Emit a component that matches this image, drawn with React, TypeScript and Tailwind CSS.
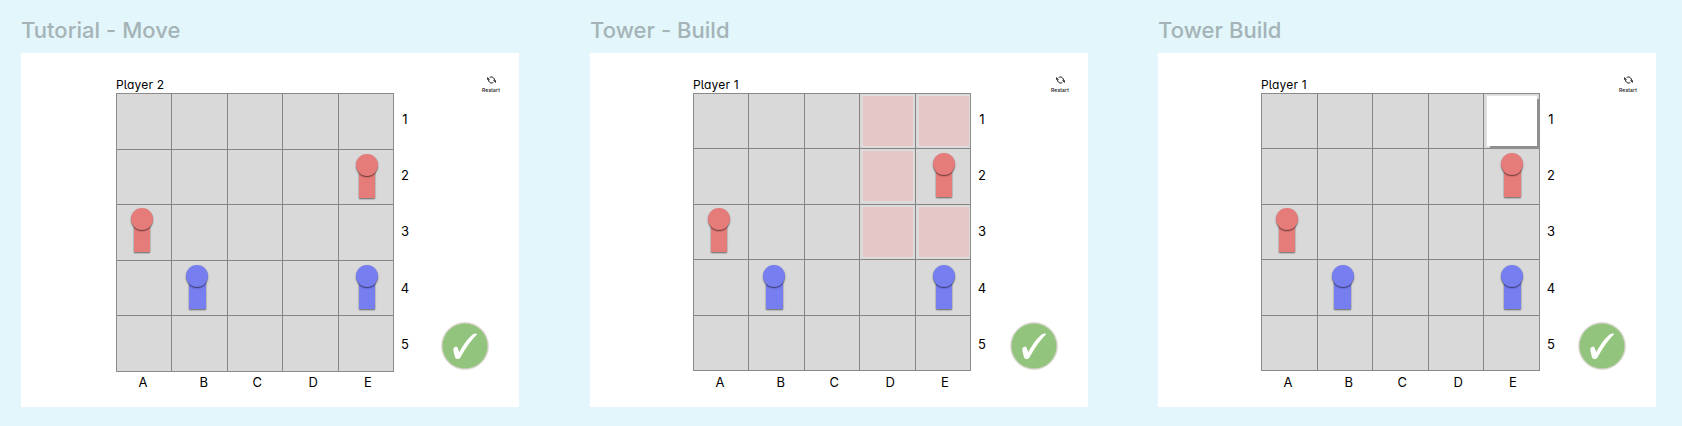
import React from "react";

type Team = "red" | "blue";
type Piece = { team: Team; x: number; y: number };
type Screen = {
  title: string;
  player: string;
  tracks: string;
  inset: string;
  spacing: string;
  labelGap: string;
  pieces: Piece[];
  highlights?: string[];
  tower?: string;
};

const COLUMNS = ["A", "B", "C", "D", "E"];
const ROWS = ["1", "2", "3", "4", "5"];

const screens: Screen[] = [
  {
    title: "Tutorial - Move",
    player: "Player 2",
    tracks: "grid-cols-[54px_55px_54px_55px_54px] grid-rows-[55px_54px_55px_54px_55px]",
    inset: "pl-[95px]",
    spacing: "mr-[71px]",
    labelGap: "pt-[2px]",
    pieces: [
      { team: "red", x: 251, y: 72 },
      { team: "red", x: 26, y: 126.3 },
      { team: "blue", x: 81.4, y: 183.4 },
      { team: "blue", x: 251, y: 183.4 },
    ],
  },
  {
    title: "Tower - Build",
    player: "Player 1",
    tracks: "grid-cols-[54px_55px_54px_55px_54px] grid-rows-[54px_55px_54px_55px_54px]",
    inset: "pl-[103px]",
    spacing: "mr-[70px]",
    labelGap: "pt-[3px]",
    pieces: [
      { team: "red", x: 251, y: 71.4 },
      { team: "red", x: 26, y: 126 },
      { team: "blue", x: 81.4, y: 183.1 },
      { team: "blue", x: 251, y: 183.1 },
    ],
    highlights: ["D1", "E1", "D2", "D3", "E3"],
  },
  {
    title: "Tower Build",
    player: "Player 1",
    tracks: "grid-cols-[55px_54px_55px_54px_55px] grid-rows-[54px_55px_54px_55px_54px]",
    inset: "pl-[103px]",
    spacing: "mr-0",
    labelGap: "pt-[3px]",
    pieces: [
      { team: "red", x: 251.3, y: 71.4 },
      { team: "red", x: 26.2, y: 126 },
      { team: "blue", x: 81.7, y: 183.1 },
      { team: "blue", x: 251.3, y: 183.1 },
    ],
    tower: "E1",
  },
];

function Pawn({ team, x, y }: Piece) {
  const color = team === "red" ? "bg-[#e67c79]" : "bg-[#767ef0]";
  return (
    <div
      className="absolute flex w-[22px] -translate-x-1/2 -translate-y-[11px] flex-col items-center"
      style={{ left: x, top: y }}
    >
      <div className={`z-10 size-[22px] shrink-0 rounded-full shadow-[0_1px_1.5px_rgba(0,0,0,0.6)] ${color}`} />
      <div className={`-mt-[7px] h-[29px] w-[16.6px] shadow-[0_1px_1.5px_rgba(0,0,0,0.55)] ${color}`} />
    </div>
  );
}

function Board({ screen }: { screen: Screen }) {
  return (
    <div className="relative w-fit">
      <div className={`grid w-fit gap-px border border-[#8b8b8b] bg-[#858585] ${screen.tracks}`}>
        {ROWS.map((row) =>
          COLUMNS.map((column) => {
            const id = column + row;
            return (
              <div key={id} className="bg-[#d9d9d9] pt-[2px] pl-[3px]">
                {screen.highlights?.includes(id) && (
                  <div className="size-[50px] bg-[#e5c7c8] outline-1 outline-[#dedede]" />
                )}
                {screen.tower === id && (
                  <div className="relative size-[50px] bg-white shadow-[3px_3px_0.5px_#8f8f8f,0_0_0_1px_#e2e2e2]" />
                )}
              </div>
            );
          })
        )}
      </div>
      {screen.pieces.map((piece) => (
        <Pawn key={`${piece.x}-${piece.y}`} {...piece} />
      ))}
    </div>
  );
}

function Restart() {
  return (
    <button className="flex w-[30px] flex-col items-center text-[#111]">
      <svg viewBox="0 0 27 24" className="h-[8px] w-[9px]" fill="none" stroke="currentColor" strokeWidth="3">
        <path d="M8 5C14 0.500 21.500 4 22.500 12M19 19C13 23.500 5.500 20 4.500 12" />
        <path d="M0.500 3v8.500h8.500zM26.500 21v-8.500h-8.500z" fill="currentColor" stroke="none" />
      </svg>
      <span className="mt-[3px] text-[5px] leading-[6px] font-medium tracking-[0.12px]">Restart</span>
    </button>
  );
}

function Confirm() {
  return (
    <button className="flex size-[48px] items-center justify-center rounded-full border border-[#eadbdf] bg-[#92c47d] shadow-[inset_0_0_0_0.5px_#dcd9cf]">
      <svg viewBox="0 0 48 48" className="size-[48px] shrink-0" fill="#fff">
        <path d="M12.500 26.500C13 24.500 16.300 24.300 16.800 26L18.200 30.300C22 23 27.500 15.500 32 12.200C33.500 11.300 35.700 11.200 36.300 12C31 17.500 25 25 19.700 35C18.800 37.300 15.300 37.700 14.500 36C13.500 33.500 12 28.500 12.500 26.500Z" />
      </svg>
    </button>
  );
}

function ScreenFrame({ screen }: { screen: Screen }) {
  return (
    <section className={`w-[498px] shrink-0 ${screen.spacing}`}>
      <h2 className="flex h-[53px] items-center pt-[7px] text-[22px] leading-none font-[450] tracking-[0.03px] text-[#a5b3b7]">
        {screen.title}
      </h2>
      <div className={`flex h-[354px] bg-white pt-[22px] ${screen.inset}`}>
        <div className="flex shrink-0 flex-col">
          <div className="h-[18px] text-[12px] leading-[19px] tracking-[0.16px] [font-feature-settings:'cv11','cv05']">
            {screen.player}
          </div>
          <Board screen={screen} />
          <div className={`flex pl-[16.500px] text-[13px] leading-4 ${screen.labelGap}`}>
            <span className="w-[61px] pl-[6px]">A</span>
            <span className="w-[53px] pl-[6px]">B</span>
            <span className="w-[56px] pl-[6px]">C</span>
            <span className="w-[55.500px] pl-[6px]">D</span>
            <span className="pl-[6px]">E</span>
          </div>
        </div>
        <div className="flex w-[22px] shrink-0 flex-col items-center pt-[17px] text-[13px]">
          {ROWS.map((row) => (
            <span key={row} className="flex h-[56.080px] shrink-0 items-center">
              {row}
            </span>
          ))}
        </div>
        <div className="flex grow flex-col items-end justify-between pt-px pb-[37px]">
          <div className="pr-[13px]">
            <Restart />
          </div>
          <div className="pr-[30px]">
            <Confirm />
          </div>
        </div>
      </div>
    </section>
  );
}

export default function App() {
  return (
    <main className="flex h-[426px] w-[1682px] overflow-hidden bg-[#e2f6fb] pl-[21px] font-['Inter',sans-serif] text-black">
      {screens.map((screen) => (
        <ScreenFrame key={screen.title} screen={screen} />
      ))}
    </main>
  );
}
